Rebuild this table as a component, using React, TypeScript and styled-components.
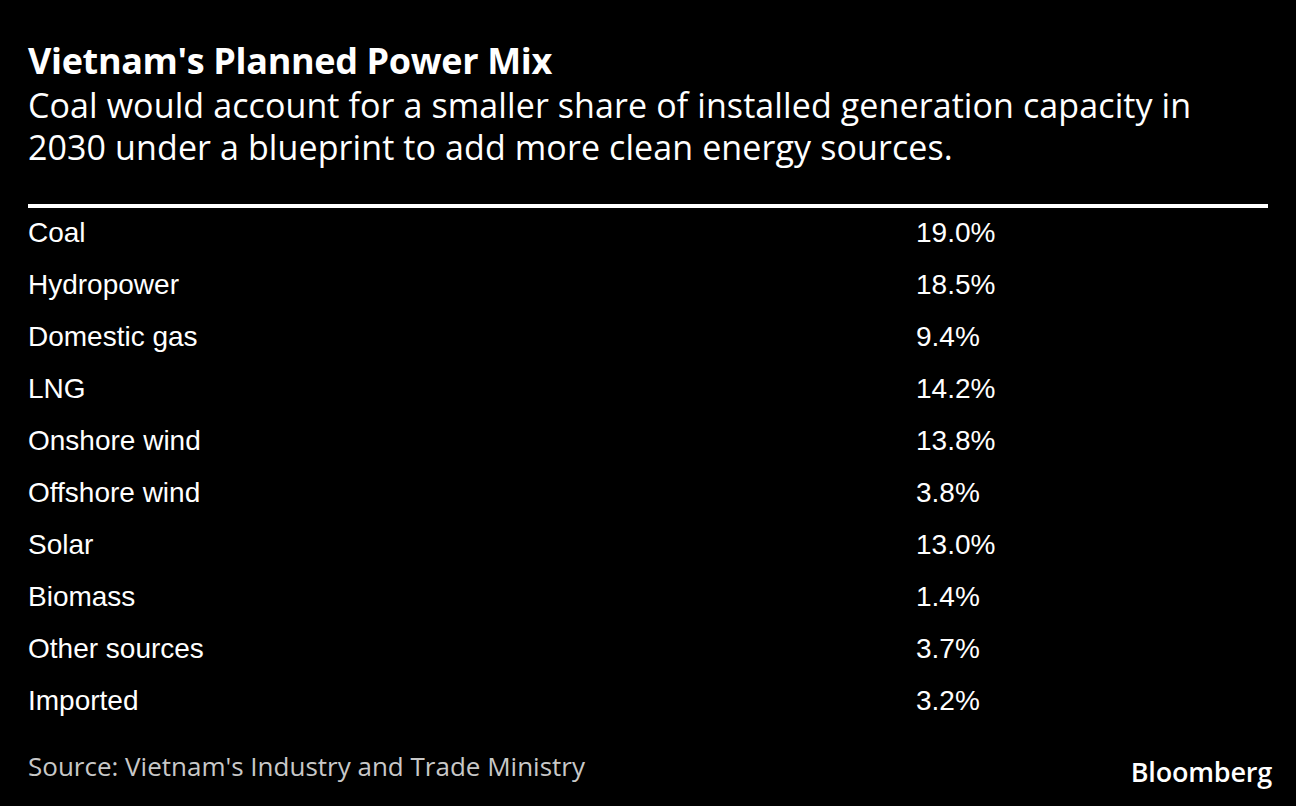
import styled, { createGlobalStyle } from 'styled-components';

const GlobalStyle = createGlobalStyle`
  html, body {
    margin: 0;
    padding: 0;
    background: #000;
  }
`;

const Page = styled.div`
  width: 1296px;
  height: 806px;
  box-sizing: border-box;
  padding: 38px 28px 0 28px;
  background: #000;
  color: #fff;
  display: flex;
  flex-direction: column;
`;

const Title = styled.h1`
  margin: 0;
  font-family: 'Open Sans', Lato, sans-serif;
  font-weight: 700;
  font-size: 36px;
  line-height: 46px;
  letter-spacing: -0.35px;
`;

const Subtitle = styled.p`
  margin: 0;
  font-family: 'Open Sans', Lato, sans-serif;
  font-weight: 400;
  font-size: 34px;
  line-height: 42px;
  letter-spacing: 0.1px;
  max-width: 1220px;
`;

const Rule = styled.div`
  margin-top: 36px;
  height: 4px;
  background: #fff;
`;

const Table = styled.div`
  display: flex;
  flex-direction: column;
`;

const Row = styled.div`
  display: grid;
  grid-template-columns: 888px 1fr;
  height: 52px;
  align-items: center;
  font-family: 'Liberation Sans', Arial, sans-serif;
  font-size: 28px;

  &:first-child {
    margin-top: -1px;
  }
`;

const Footer = styled.div`
  margin-top: 21px;
  display: flex;
  justify-content: space-between;
  align-items: flex-end;
`;

const Source = styled.span`
  font-family: 'Open Sans', Lato, sans-serif;
  font-size: 26px;
  color: #c8c8c8;
`;

const Logo = styled.span`
  font-family: 'Open Sans', 'DejaVu Sans', sans-serif;
  font-weight: 600;
  font-size: 27px;
  letter-spacing: -0.2px;
  color: #fff;
  margin-bottom: -6px;
  margin-right: -4px;
`;

const rows: [string, string][] = [
  ['Coal', '19.0%'],
  ['Hydropower', '18.5%'],
  ['Domestic gas', '9.4%'],
  ['LNG', '14.2%'],
  ['Onshore wind', '13.8%'],
  ['Offshore wind', '3.8%'],
  ['Solar', '13.0%'],
  ['Biomass', '1.4%'],
  ['Other sources', '3.7%'],
  ['Imported', '3.2%'],
];

const App = () => {
  return (
    <>
      <GlobalStyle />
      <Page>
        <Title>Vietnam's Planned Power Mix</Title>
        <Subtitle>
          Coal would account for a smaller share of installed generation capacity in 2030 under a
          blueprint to add more clean energy sources.
        </Subtitle>
        <Rule />
        <Table>
          {rows.map(([name, value]) => (
            <Row key={name}>
              <span>{name}</span>
              <span>{value}</span>
            </Row>
          ))}
        </Table>
        <Footer>
          <Source>Source: Vietnam's Industry and Trade Ministry</Source>
          <Logo>Bloomberg</Logo>
        </Footer>
      </Page>
    </>
  );
};

export default App;
